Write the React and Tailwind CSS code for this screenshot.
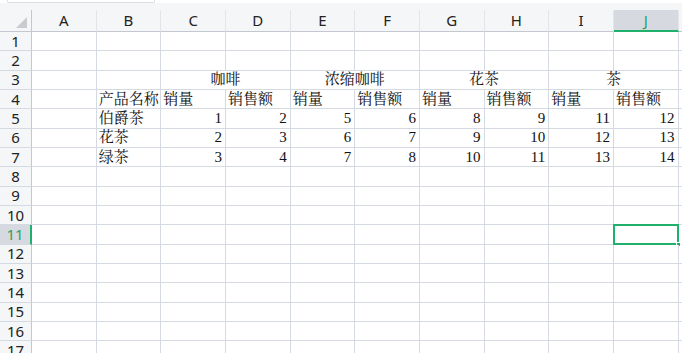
import React from "react";

const COLS = ["A", "B", "C", "D", "E", "F", "G", "H", "I", "J"];

const rows = {
  3: [null, null, { t: "咖啡", span: 2, align: "c" }, { t: "浓缩咖啡", span: 2, align: "c" }, { t: "花茶", span: 2, align: "c" }, { t: "茶", span: 2, align: "c" }],
  4: [null, "产品名称", "销量", "销售额", "销量", "销售额", "销量", "销售额", "销量", "销售额"],
  5: [null, "伯爵茶", 1, 2, 5, 6, 8, 9, 11, 12],
  6: [null, "花茶", 2, 3, 6, 7, 9, 10, 12, 13],
  7: [null, "绿茶", 3, 4, 7, 8, 10, 11, 13, 14],
};

const cellFont = { fontFamily: '"Liberation Serif", "Noto Serif CJK SC", "Noto Sans CJK SC", serif' };
const headFont = { fontFamily: '"Noto Sans", "Noto Sans CJK SC", sans-serif' };

function Cell({ children, span = 1, align = "l", selected = false }) {
  const alignCls = align === "r" ? "justify-end pr-[3px]" : align === "c" ? "justify-center" : "justify-start pl-[2px]";
  return (
    <div
      className={`relative flex items-center border-r border-b border-[#d5d9e2] bg-white text-[15px] leading-none text-[#111] whitespace-nowrap ${alignCls} ${span === 2 ? "col-span-2" : ""}`}
      style={cellFont}
    >
      {children}
      {selected && (
        <div className="absolute -left-[1px] -top-[1px] -right-[1px] -bottom-[1px] border-2 border-[#1fb06b]">
          <div className="absolute -right-[4px] -bottom-[4px] w-[5px] h-[5px] bg-[#1fb06b] border border-white" />
        </div>
      )}
    </div>
  );
}

function BodyRow({ n }) {
  const data = rows[n];
  const cells = [];
  if (data) {
    data.forEach((d, i) => {
      if (d && typeof d === "object") {
        cells.push(<Cell key={i} span={d.span} align={d.align}>{d.t}</Cell>);
      } else if (d === null) {
        cells.push(<Cell key={i} />);
      } else if (typeof d === "number") {
        cells.push(<Cell key={i} align="r">{d}</Cell>);
      } else {
        cells.push(<Cell key={i}>{d}</Cell>);
      }
    });
  } else {
    COLS.forEach((c, i) => {
      cells.push(<Cell key={i} selected={n === 11 && c === "J"} />);
    });
  }
  const sel = n === 11;
  return (
    <>
      <div
        className={`flex items-center justify-center border-b border-[#d5d9e2] text-[15px] leading-none ${
          sel ? "bg-[#d6d9df] text-[#1fa464] border-r-2 border-r-[#1fb06b]" : "bg-[#f5f6f8] text-[#222] border-r border-r-[#c3c7cf]"
        }`}
        style={headFont}
      >
        {n}
      </div>
      {cells}
      <div className="border-b border-[#d5d9e2] bg-white" />
    </>
  );
}

export default function App() {
  const body = [];
  for (let i = 1; i <= 17; i++) body.push(<BodyRow key={i} n={i} />);
  return (
    <div className="w-[682px] h-[353px] overflow-hidden bg-white">
      <div className="h-[10px] bg-[#f5f6f8] border-t-[3px] border-white relative">
        <div className="absolute left-[7px] -top-[3px] w-[148px] h-[3px] border-l border-r border-b border-[#dcdde1] bg-white rounded-b-[2px]" />
      </div>
      <div className="grid grid-cols-[32px_repeat(10,64.67px)_1fr] grid-rows-[22px_repeat(17,19.33px)]">
        <div className="relative bg-[#f5f6f8] border-r border-b border-r-[#c3c7cf] border-b-[#c3c7cf]">
          <svg className="absolute left-[16px] top-[7px]" width="11" height="11" viewBox="0 0 11 11">
            <polygon points="11,0 11,11 0,11" fill="#c9cbcf" />
          </svg>
        </div>
        {COLS.map((c) => {
          const sel = c === "J";
          return (
            <div
              key={c}
              className={`flex items-center justify-center text-[15px] leading-none ${
                sel
                  ? "bg-[#d6d9df] text-[#1fa464] border-r border-r-[#e3e5ea] border-b-2 border-b-[#1fb06b]"
                  : "bg-[#f5f6f8] text-[#222] border-r border-r-[#e3e5ea] border-b border-b-[#c3c7cf]"
              }`}
              style={headFont}
            >
              {c}
            </div>
          );
        })}
        <div className="bg-[#f5f6f8] border-b border-b-[#c3c7cf]" />
        {body}
      </div>
    </div>
  );
}
